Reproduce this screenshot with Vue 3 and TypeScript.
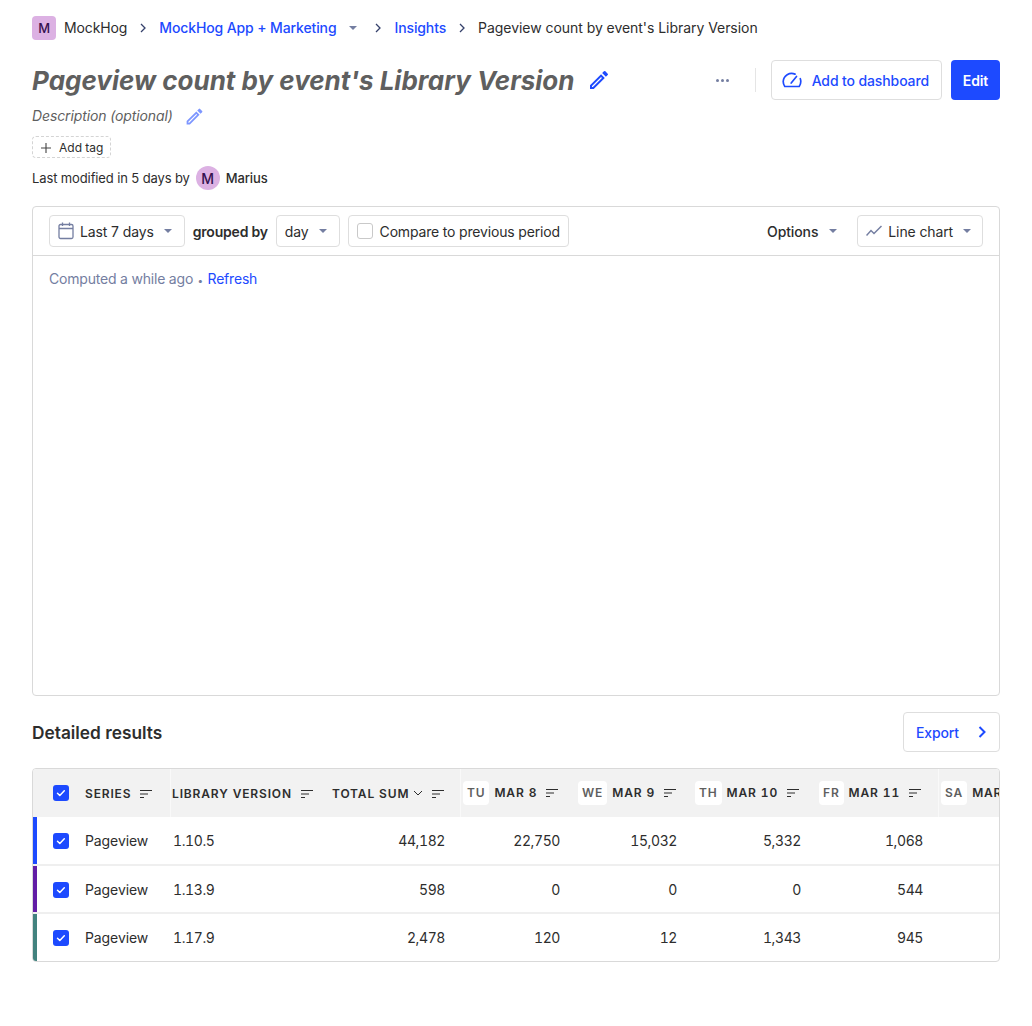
<script setup lang="ts">
interface Row { color: string; version: string; values: string[] }
const rows: Row[] = [
  { color: '#1d4aff', version: '1.10.5', values: ['44,182', '22,750', '15,032', '5,332', '1,068', ''] },
  { color: '#621da6', version: '1.13.9', values: ['598', '0', '0', '0', '544', ''] },
  { color: '#42827e', version: '1.17.9', values: ['2,478', '120', '12', '1,343', '945', ''] },
]
const days = [
  { day: 'TU', date: 'MAR 8', sort: true },
  { day: 'WE', date: 'MAR 9', sort: true },
  { day: 'TH', date: 'MAR 10', sort: true },
  { day: 'FR', date: 'MAR 11', sort: true },
  { day: 'SA', date: 'MAR 12', sort: false },
]
</script>

<template>
  <div class="page">
    <nav class="crumbs">
      <span class="logo">M</span>
      <span class="crumb">MockHog</span>
      <svg class="sep" viewBox="0 0 8 10"><path d="M2 1l4 4-4 4" /></svg>
      <a class="crumb link">MockHog App + Marketing</a>
      <span class="caret crumb-caret"></span>
      <svg class="sep" viewBox="0 0 8 10"><path d="M2 1l4 4-4 4" /></svg>
      <a class="crumb link">Insights</a>
      <svg class="sep" viewBox="0 0 8 10"><path d="M2 1l4 4-4 4" /></svg>
      <span class="crumb current">Pageview count by event's Library Version</span>
    </nav>

    <header class="title-row">
      <div class="title-left">
        <h1>Pageview count by event's Library Version</h1>
        <svg class="pencil" viewBox="0 0 24 24"><path d="M3 17.250V21h3.750L17.810 9.940l-3.750-3.750L3 17.250zM5.900 19H5v-.9l9.060-9.060.9.9L5.900 19zM20.710 7.040a1 1 0 0 0 0-1.410l-2.340-2.340a1 1 0 0 0-1.410 0l-1.830 1.830 3.750 3.750 1.830-1.830z" /></svg>
      </div>
      <div class="actions">
        <span class="dots"><i></i><i></i><i></i></span>
        <span class="vline"></span>
        <button class="btn outline dash">
          <svg class="gauge" viewBox="0 0 20 16"><path d="M13 2.100A8.500 8.500 0 0 0 1.200 9.500c0 2 .6 3.600 1.600 5h14.400c1-1.400 1.600-3 1.600-5 0-1-.2-2-.5-2.800" /><path d="M9.200 11l5.300-6.500" /></svg>
          Add to dashboard
        </button>
        <button class="btn primary">Edit</button>
      </div>
    </header>

    <div class="desc">
      <span>Description (optional)</span>
      <svg class="pencil-sm" viewBox="0 0 24 24"><path d="M3 17.250V21h3.750L17.810 9.940l-3.750-3.750L3 17.250zM5.900 19H5v-.9l9.060-9.060.9.9L5.900 19zM20.710 7.040a1 1 0 0 0 0-1.410l-2.340-2.340a1 1 0 0 0-1.410 0l-1.830 1.830 3.750 3.750 1.830-1.830z" /></svg>
    </div>

    <div class="tag">
      <svg class="plus" viewBox="0 0 10 10"><path d="M5 0v10M0 5h10" /></svg>
      Add tag
    </div>

    <div class="modified">
      <span>Last modified in 5 days by</span>
      <span class="avatar">M</span>
      <span class="author">Marius</span>
    </div>

    <section class="card">
      <div class="toolbar">
        <div class="tool-left">
          <div class="select">
            <svg class="cal" viewBox="0 0 16 18"><rect x="1" y="2.500" width="14" height="14" rx="1.500" /><path d="M1 6.500h14M4.500 .5v3.500M11.500 .5v3.500" /></svg>
            <span>Last 7 days</span><span class="caret"></span>
          </div>
          <strong class="grouped">grouped by</strong>
          <div class="select">
            <span>day</span><span class="caret"></span>
          </div>
          <label class="select compare"><span class="box"></span>Compare to previous period</label>
        </div>
        <div class="tool-right">
          <div class="options"><span>Options</span><span class="caret"></span></div>
          <div class="select chart-type">
            <svg class="line" viewBox="0 0 16 12"><path d="M.5 10.500l4.500-5 3 3 7.500-7.500" /></svg>
            <span>Line chart</span><span class="caret"></span>
          </div>
        </div>
      </div>
      <div class="chart">
        <span class="muted">Computed a while ago</span>
        <span class="muted bullet">•</span>
        <a class="refresh">Refresh</a>
      </div>
    </section>

    <div class="results-head">
      <h2>Detailed results</h2>
      <button class="btn outline export">
        Export
        <svg class="chev" viewBox="0 0 10 14"><path d="M2.500 2l5 5-5 5" /></svg>
      </button>
    </div>

    <div class="table-wrap">
      <table>
        <colgroup>
          <col class="c-series" /><col class="c-lib" /><col class="c-total" />
          <col class="c-tu" /><col class="c-we" /><col class="c-th" /><col class="c-fr" /><col class="c-sa" />
        </colgroup>
        <thead>
          <tr>
            <th class="th-series divided">
              <span class="check"><svg viewBox="0 0 16 16"><path d="M4.500 8.300l2.300 2.200 4.500-4.700" /></svg></span>
              <span>SERIES</span>
              <svg class="sort" viewBox="0 0 14 10"><path d="M1 1.500h12M1 5h8M1 8.500h4" /></svg>
            </th>
            <th class="th-lib">
              <span>LIBRARY VERSION</span>
              <svg class="sort" viewBox="0 0 14 10"><path d="M1 1.500h12M1 5h8M1 8.500h4" /></svg>
            </th>
            <th class="divided">
              <span>TOTAL SUM</span>
              <svg class="down" viewBox="0 0 10 6"><path d="M1 1l4 4 4-4" /></svg>
              <svg class="sort" viewBox="0 0 14 10"><path d="M1 1.500h12M1 5h8M1 8.500h4" /></svg>
            </th>
            <th v-for="d in days" :key="d.day" class="th-day" :class="{ divided: d.day === 'FR' }">
              <span class="day">{{ d.day }}</span>
              <span class="date">{{ d.date }}</span>
              <svg v-if="d.sort" class="sort" viewBox="0 0 14 10"><path d="M1 1.500h12M1 5h8M1 8.500h4" /></svg>
            </th>
          </tr>
        </thead>
        <tbody>
          <tr v-for="row in rows" :key="row.version">
            <td class="td-series">
              <span class="stripe" :style="{ background: row.color }"></span>
              <span class="check"><svg viewBox="0 0 16 16"><path d="M4.500 8.300l2.300 2.200 4.500-4.700" /></svg></span>
              <span>Pageview</span>
            </td>
            <td class="td-lib">{{ row.version }}</td>
            <td v-for="(v, i) in row.values" :key="i" class="num">{{ v }}</td>
          </tr>
        </tbody>
      </table>
    </div>
  </div>
</template>

<style scoped>
.page {
  box-sizing: border-box;
  width: 1032px;
  height: 1026px;
  padding: 16px 32px 0;
  font-family: Inter, "Liberation Sans", sans-serif;
  font-size: 14px;
  letter-spacing: -0.12px;
  color: #2d2d2d;
  background: #fff;
  overflow: hidden;
}
.crumbs { display: flex; align-items: center; height: 24px; }
.logo {
  width: 24px; height: 24px; border-radius: 4px; background: #dcb1e3; color: #35104f;
  display: flex; align-items: center; justify-content: center; font-size: 13px; font-weight: 500; margin-right: 8px;
}
.crumb { white-space: nowrap; padding-bottom: 2px; }
.current { letter-spacing: -0.05px; }
.link { color: #1d4aff; font-weight: 500; }
.sep { width: 8px; height: 10px; margin: 0 12px; fill: none; stroke: #35416b; stroke-width: 1.300; }
.caret { display: inline-block; width: 0; height: 0; border-left: 4px solid transparent; border-right: 4px solid transparent; border-top: 4px solid #747ea1; }
.crumb-caret { margin: 0 5px 0 13px; }

.title-row { display: flex; justify-content: space-between; align-items: center; height: 40px; margin-top: 20px; }
.title-left { display: flex; align-items: center; }
h1 { margin: 0; padding-top: 2px; font-size: 26px; line-height: 38px; font-weight: 700; font-style: italic; color: #5f5f5f; letter-spacing: 0; white-space: nowrap; }
.pencil { width: 24px; height: 24px; margin-left: 12px; fill: #1d4aff; }
.actions { display: flex; align-items: center; }
.dots { display: flex; gap: 2px; margin-right: 26px; }
.dots i { width: 3px; height: 3px; border-radius: 50%; background: #747ea1; }
.vline { width: 1px; height: 24px; background: #e5e5e5; margin-right: 15px; }
.btn {
  font-family: inherit; font-size: 14px; font-weight: 500; letter-spacing: -0.12px; height: 40px; border-radius: 4px;
  display: flex; align-items: center; box-sizing: border-box; cursor: pointer; padding-top: 1px;
}
.outline { background: #fff; color: #1d4aff; border: 1px solid #dedede; padding-left: 12px; padding-right: 12px; }
.dash { padding-left: 10px; }
.primary { background: #1d4aff; color: #fff; border: 0; width: 49px; justify-content: center; padding-left: 0; padding-right: 0; margin-left: 9px; font-weight: 600; }
.gauge { width: 20px; height: 16px; margin-right: 10px; fill: none; stroke: #1d4aff; stroke-width: 1.700; stroke-linecap: round; stroke-linejoin: round; }

.desc { display: flex; align-items: center; box-sizing: border-box; height: 20px; margin-top: 6px; font-style: italic; color: #5f5f5f; }
.desc span { padding-bottom: 2px; }
.pencil-sm { width: 21px; height: 21px; margin-left: 11px; fill: #7d96ff; }
.tag {
  display: inline-flex; align-items: center; box-sizing: border-box; height: 22px; margin-top: 10px; padding: 1px 7px 0 8px;
  border: 1px dashed #d4d4d4; border-radius: 4px; font-size: 12px; letter-spacing: 0;
}
.plus { width: 10px; height: 10px; margin-right: 8px; fill: none; stroke: #444; stroke-width: 1.100; }
.modified { display: flex; align-items: center; height: 24px; margin-top: 8px; font-size: 13px; }
.avatar {
  width: 24px; height: 24px; border-radius: 50%; background: #dcb1e3; color: #35104f; margin: 0 6px;
  display: flex; align-items: center; justify-content: center; font-size: 14px; font-weight: 500;
}
.author { font-weight: 500; }

.card { box-sizing: border-box; height: 490px; margin-top: 16px; border: 1px solid #d9d9d9; border-radius: 4px; }
.toolbar {
  box-sizing: border-box; height: 49px; display: flex; justify-content: space-between; align-items: center;
  padding: 0 16px; border-bottom: 1px solid #d9d9d9;
}
.tool-left, .tool-right { display: flex; align-items: center; }
.select {
  box-sizing: border-box; display: flex; align-items: center; height: 32px; padding: 0 12px 0 8px;
  border: 1px solid #dedede; border-radius: 4px; white-space: nowrap;
}
.select .caret { margin-left: 10px; }
.chart-type { padding-right: 11px; }
.cal { width: 16px; height: 18px; margin-right: 6px; fill: none; stroke: #747ea1; stroke-width: 1.300; }
.grouped { font-weight: 600; margin: 0 8px; letter-spacing: -0.2px; }
.compare { margin-left: 8px; padding: 0 8px; letter-spacing: -0.17px; }
.box { width: 16px; height: 16px; box-sizing: border-box; border: 1.500px solid #c9c9c9; border-radius: 3px; margin-right: 7px; }
.options { display: flex; align-items: center; margin-right: 20px; font-weight: 500; }
.options .caret { margin-left: 11px; }
.line { width: 16px; height: 12px; margin-right: 6px; fill: none; stroke: #747ea1; stroke-width: 1.500; }
.chart { padding: 15px 16px 0; line-height: 16px; letter-spacing: -0.2px; }
.muted { color: #747ea1; }
.bullet { margin: 0 4.500px; font-size: 10px; }
.refresh { color: #1d4aff; }

.results-head { display: flex; justify-content: space-between; align-items: center; height: 40px; margin-top: 16px; }
h2 { margin: 2px 0 0; font-size: 17.300px; font-weight: 600; line-height: 24px; color: #2d2d2d; letter-spacing: 0; }
.chev { width: 10px; height: 14px; margin-left: 18px; fill: none; stroke: #1d4aff; stroke-width: 2; }

.table-wrap {
  box-sizing: border-box; width: 968px; margin-top: 16px; border: 1px solid #d9d9d9; border-radius: 4px; overflow: hidden;
}
table { border-collapse: separate; border-spacing: 0; table-layout: fixed; width: 1040px; }
.c-series { width: 138px; } .c-lib { width: 145px; } .c-total { width: 145px; }
.c-tu { width: 115px; } .c-we { width: 117px; } .c-th { width: 124px; } .c-fr { width: 122px; } .c-sa { width: 134px; }
th {
  height: 48px; padding: 0 16px; background: #f2f2f2; box-sizing: border-box; text-align: left;
  font-size: 12px; font-weight: 600; letter-spacing: 0.85px; white-space: nowrap; color: #2d2d2d; vertical-align: middle;
  font-variant-numeric: tabular-nums;
}
.divided { border-right: 1px solid #f9f9f9; }
.th-series { padding-left: 20px; }
.th-lib { padding-left: 1px; padding-right: 0; }
.th-day { padding-left: 2px; padding-right: 0; }
.sort { width: 14px; height: 10px; margin-left: 8px; fill: none; stroke: #2d2d2d; stroke-width: 1.100; vertical-align: -1px; }
.down { width: 10px; height: 6px; margin-left: 4px; fill: none; stroke: #2d2d2d; stroke-width: 1; vertical-align: 2px; }
.day {
  display: inline-block; box-sizing: border-box; height: 24px; line-height: 24px; padding: 0 4px; margin-right: 5px;
  background: #fff; border-radius: 4px; color: #5f5f5f;
}
.check {
  display: inline-flex; width: 16px; height: 16px; background: #1d4aff; border-radius: 3px; margin-right: 16px; vertical-align: -3px;
}
.check svg { width: 16px; height: 16px; fill: none; stroke: #fff; stroke-width: 1.500; stroke-linecap: round; stroke-linejoin: round; }
td {
  height: 48px; box-sizing: border-box; padding: 0 16px; border-top: 2px solid #efefef; white-space: nowrap;
  letter-spacing: -0.4px; font-variant-numeric: tabular-nums;
}
tbody tr:first-child td { border-top: 0; height: 47px; }
tbody tr:last-child td { height: 49px; }
.td-series { position: relative; padding-left: 20px; letter-spacing: -0.1px; }
.stripe { position: absolute; left: 0; top: 0; bottom: 0; width: 4px; }
.td-lib { padding-left: 2px; }
.num { text-align: right; }
</style>
